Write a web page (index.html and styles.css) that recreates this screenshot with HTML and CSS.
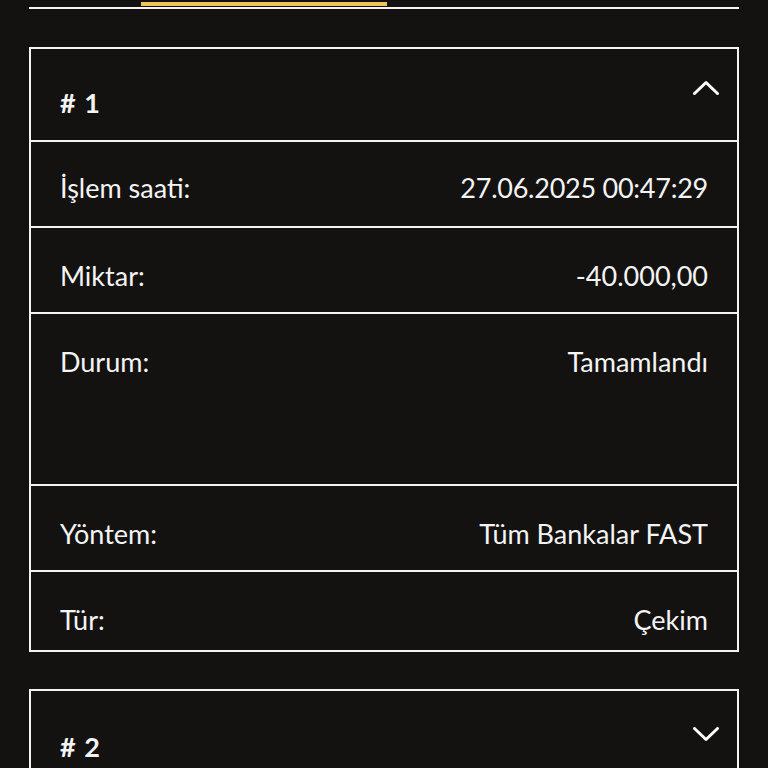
FILE: index.html
```html
<!DOCTYPE html>
<html lang="tr">
<head>
<meta charset="utf-8">
<link rel="stylesheet" href="styles.css">
</head>
<body>
<div class="page">
  <div class="tabs">
    <div class="tab active"></div>
  </div>

  <div class="card">
    <div class="card-head">
      <span class="card-title"># 1</span>
      <svg class="chev" viewBox="0 0 28 15" width="28" height="15"><polyline points="2.5,13.5 14,2.5 25.5,13.5" fill="none" stroke="#fff" stroke-width="3" stroke-linecap="round" stroke-linejoin="round"/></svg>
    </div>
    <div class="row first"><span>İşlem saati:</span><span class="num">27.06.2025 00:47:29</span></div>
    <div class="row"><span>Miktar:</span><span>-40.000,00</span></div>
    <div class="row tall"><span>Durum:</span><span>Tamamlandı</span></div>
    <div class="row"><span>Yöntem:</span><span>Tüm Bankalar FAST</span></div>
    <div class="row last"><span>Tür:</span><span>Çekim</span></div>
  </div>

  <div class="card second">
    <div class="card-head">
      <span class="card-title"># 2</span>
      <svg class="chev" viewBox="0 0 28 15" width="28" height="15"><polyline points="2.5,1.5 14,12.5 25.5,1.5" fill="none" stroke="#fff" stroke-width="3" stroke-linecap="round" stroke-linejoin="round"/></svg>
    </div>
  </div>
</div>
</body>
</html>
```

FILE: styles.css
```css
html, body {
  margin: 0;
  padding: 0;
  background: #131211;
  height: 768px;
  overflow: hidden;
}
.page {
  padding: 0 29px;
  font-family: Lato, "Liberation Sans", sans-serif;
  color: #f4f4f4;
}
.tabs {
  display: flex;
  height: 7px;
  border-bottom: 2px solid #f4f4f4;
  padding-left: 112px;
}
.tab.active {
  width: 246px;
  margin-top: 2px;
  height: 4px;
  background: #f2c35c;
}
.card {
  margin-top: 38px;
  border: 2px solid #f4f4f4;
  overflow: hidden;
}
.card.second {
  margin-top: 37px;
}
.card-head {
  position: relative;
  height: 91px;
}
.card-title {
  position: absolute;
  left: 29px;
  top: 36px;
  font-size: 27px;
  font-weight: 700;
  line-height: 36px;
  word-spacing: 2px;
}
.chev {
  position: absolute;
  right: 17px;
  top: 31px;
}
.second .chev {
  top: 36px;
}
.second .card-title {
  top: 38px;
}
.row {
  display: flex;
  justify-content: space-between;
  border-top: 2px solid #f4f4f4;
  padding: 29px 29px 17px;
  font-size: 27px;
  line-height: 38px;
}
.row.first {
  padding-top: 27px;
  padding-bottom: 19px;
}
.num {
  letter-spacing: -0.25px;
}
.row.tall {
  height: 124px;
}
.row.last {
  padding-bottom: 11px;
}
```
